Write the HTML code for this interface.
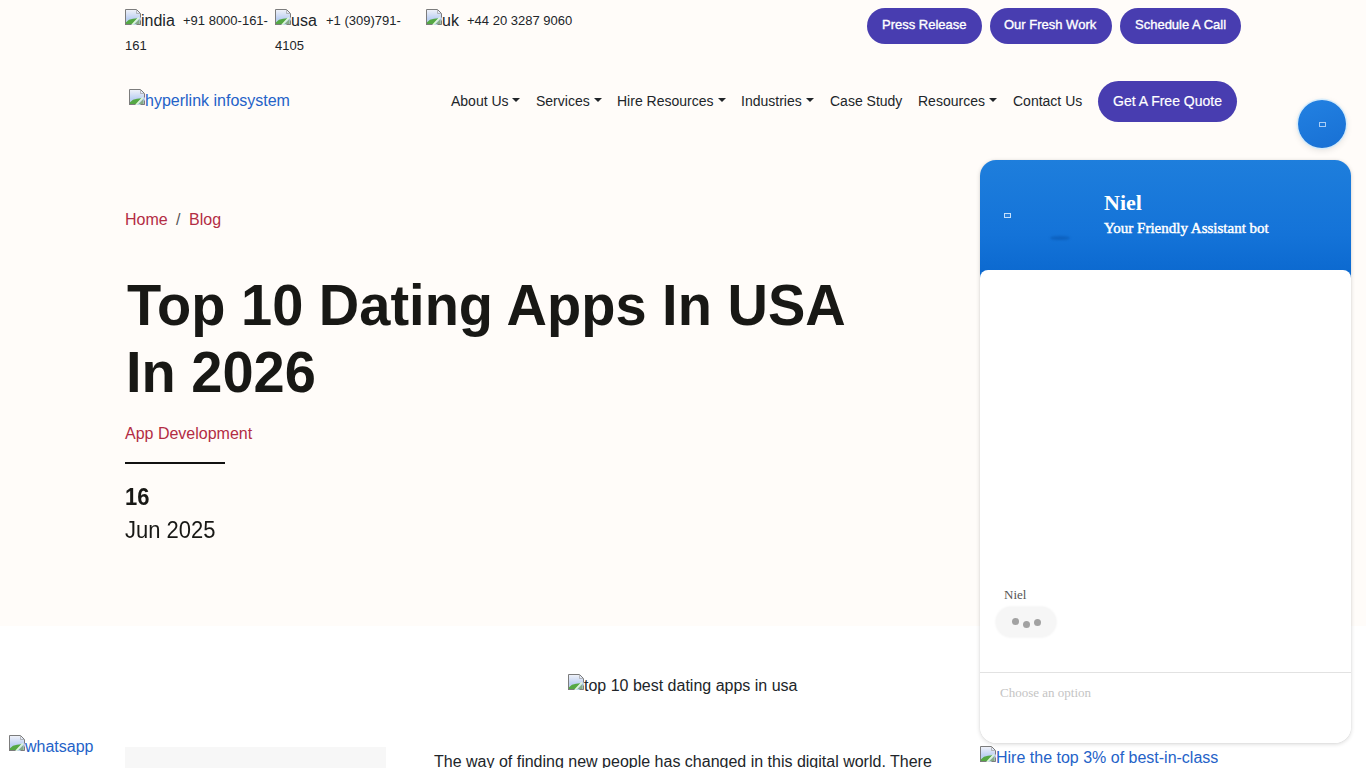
<!DOCTYPE html>
<html><head><meta charset="utf-8">
<style>
*{box-sizing:border-box;margin:0;padding:0}
html,body{width:1366px;height:768px;overflow:hidden}
body{font-family:"Liberation Sans",sans-serif;background:#fff;color:#212529;position:relative}
.t{position:absolute;white-space:nowrap;line-height:1}
.hero{position:absolute;left:0;top:0;width:1366px;height:626px;background:#fffcf9}
.bi{position:absolute;width:16px;height:16px}
.pill{position:absolute;top:8px;height:36px;border-radius:18px;background:#483db0}
.pt{color:#fff;font-size:13px;-webkit-text-stroke:.35px #fff}
.nav{font-size:14px;color:#212529}
.caret{position:absolute;width:0;height:0;border-left:4px solid transparent;border-right:4px solid transparent;border-top:4.5px solid #212529}
.red{color:#b32c44}
.lnk{color:#2462c8}
.ttl{font-size:56px;line-height:67px;font-weight:bold;color:#181815;transform:scaleY(1.04);transform-origin:0 53px}
.srf{font-family:"Liberation Serif",serif}
</style></head><body>
<svg width="0" height="0" style="position:absolute">
<defs>
<linearGradient id="sky" x1="0" y1="0" x2="0" y2="1"><stop offset="0" stop-color="#f4f5f9"/><stop offset=".62" stop-color="#bccff2"/><stop offset="1" stop-color="#bcd8e8"/></linearGradient>
<symbol id="brk" viewBox="0 0 16 16">
<path d="M0 0h11.5l4.5 4.5V16H0z" fill="url(#sky)"/>
<path d="M1 15V13.2Q3.5 10.2 8 9.8L12.5 9.2 7.6 15z" fill="#55a844"/>
<path d="M9.6 15L14.5 10V15z" fill="#86ab86"/>
<path d="M6.6 16.2L14 8.6" stroke="#dff7d6" stroke-width="1.5"/>
<path d="M.5 16V.5h11l4 4v4" fill="none" stroke="#7c7c7c"/>
<path d="M11.5 .5v4h4" fill="none" stroke="#a0a0a0" stroke-width=".7"/>
<path d="M.5 15.5h6M11.5 15.5h4V11.5" fill="none" stroke="#7c7c7c"/>
</symbol>
</defs></svg>
<div class="hero"></div>

<!-- top bar -->
<svg class="bi" style="left:125px;top:9px"><use href="#brk"/></svg>
<div class="t" style="left:141px;top:13px;font-size:16px">india</div>
<div class="t" style="left:183px;top:14px;font-size:13px">+91 8000-161-</div>
<div class="t" style="left:125px;top:39px;font-size:13px">161</div>

<svg class="bi" style="left:275px;top:9px"><use href="#brk"/></svg>
<div class="t" style="left:291px;top:13px;font-size:16px">usa</div>
<div class="t" style="left:326px;top:14px;font-size:13px">+1 (309)791-</div>
<div class="t" style="left:275px;top:39px;font-size:13px">4105</div>

<svg class="bi" style="left:426px;top:9px"><use href="#brk"/></svg>
<div class="t" style="left:442px;top:13px;font-size:16px">uk</div>
<div class="t" style="left:467px;top:14px;font-size:13px">+44 20 3287 9060</div>

<div class="pill" style="left:867px;width:115px"></div>
<div class="t pt" style="left:882px;top:18px">Press Release</div>
<div class="pill" style="left:990px;width:122px"></div>
<div class="t pt" style="left:1004px;top:18px">Our Fresh Work</div>
<div class="pill" style="left:1120px;width:121px"></div>
<div class="t pt" style="left:1135px;top:18px">Schedule A Call</div>

<!-- nav -->
<svg class="bi" style="left:129px;top:89px"><use href="#brk"/></svg>
<div class="t lnk" style="left:145px;top:93px;font-size:16px">hyperlink infosystem</div>

<div class="t nav" style="left:451px;top:94px">About Us</div><div class="caret" style="left:512px;top:98px"></div>
<div class="t nav" style="left:536px;top:94px">Services</div><div class="caret" style="left:594px;top:98px"></div>
<div class="t nav" style="left:617px;top:94px">Hire Resources</div><div class="caret" style="left:718px;top:98px"></div>
<div class="t nav" style="left:741px;top:94px">Industries</div><div class="caret" style="left:806px;top:98px"></div>
<div class="t nav" style="left:830px;top:94px">Case Study</div>
<div class="t nav" style="left:918px;top:94px">Resources</div><div class="caret" style="left:989px;top:98px"></div>
<div class="t nav" style="left:1013px;top:94px">Contact Us</div>
<div class="pill" style="left:1098px;top:81px;width:139px;height:41px;border-radius:20.5px"></div>
<div class="t" style="left:1113px;top:94px;font-size:14px;color:#fff;-webkit-text-stroke:.2px #fff">Get A Free Quote</div>

<!-- hero content -->
<div class="t red" style="left:125px;top:212px;font-size:16px">Home</div>
<div class="t" style="left:176px;top:212px;font-size:16px;color:#555">/</div>
<div class="t red" style="left:189px;top:212px;font-size:16px">Blog</div>
<div class="t ttl" style="left:127px;top:272px">Top 10 Dating Apps In USA</div>
<div class="t ttl" style="left:126px;top:339px">In 2026</div>
<div class="t red" style="left:125px;top:426px;font-size:16px">App Development</div>
<div class="t" style="left:125px;top:462px;width:100px;height:2px;background:#111"></div>
<div class="t" style="left:125px;top:487px;font-size:22px;font-weight:bold;color:#181815;transform:scaleY(1.07);transform-origin:0 18px">16</div>
<div class="t" style="left:125px;top:519px;font-size:22px;color:#181815;transform:scaleY(1.06);transform-origin:0 3px">Jun 2025</div>

<!-- content -->
<svg class="bi" style="left:568px;top:674px"><use href="#brk"/></svg>
<div class="t" style="left:584px;top:678px;font-size:16px;color:#212529">top 10 best dating apps in usa</div>
<svg class="bi" style="left:9px;top:735px"><use href="#brk"/></svg>
<div class="t lnk" style="left:25px;top:739px;font-size:16px">whatsapp</div>
<div class="t" style="left:125px;top:747px;width:261px;height:30px;background:#f7f7f7"></div>
<div class="t" style="left:434px;top:754px;font-size:16px;color:#212529">The way of finding new people has changed in this digital world. There</div>
<svg class="bi" style="left:980px;top:746px"><use href="#brk"/></svg>
<div class="t lnk" style="left:996px;top:750px;font-size:16px">Hire the top 3% of best-in-class</div>

<!-- chat -->
<div class="t" style="left:1298px;top:100px;width:48px;height:48px;border-radius:50%;background:linear-gradient(160deg,#2281e2,#1870d4);box-shadow:0 0 0 1.5px rgba(205,235,255,.8),0 2px 7px rgba(0,0,0,.12)"></div>
<div class="t" style="left:1319px;top:122px;width:7px;height:5px;border:1.5px solid #a9cdf5"></div>
<div class="t" style="left:980px;top:160px;width:371px;height:583px;border-radius:16px;background:#fff;box-shadow:0 1px 4px rgba(0,0,0,.17),0 0 1px rgba(0,0,0,.12);overflow:hidden">
  <div style="position:absolute;left:0;top:0;width:371px;height:125px;background:linear-gradient(#1e7edc 0%,#1473d8 60%,#0966cd 100%)"></div>
  <div style="position:absolute;left:0;top:110px;width:371px;height:480px;background:#fff;border-radius:8px 8px 0 0"></div>
  <div style="position:absolute;left:24px;top:53px;width:7px;height:5px;border:1.3px solid #c4e0fb;background:#2a80dc"></div>
  <div style="position:absolute;left:70px;top:76px;width:20px;height:4px;border-radius:50%;background:#0b5cb8;opacity:.75;filter:blur(1.3px)"></div>
  <div class="t srf" style="left:124px;top:32px;font-size:22px;font-weight:bold;color:#fff">Niel</div>
  <div class="t srf" style="left:124px;top:61px;font-size:15px;color:#fff;-webkit-text-stroke:.45px #fff">Your Friendly Assistant bot</div>
  <div class="t srf" style="left:24px;top:428px;font-size:13px;color:#555">Niel</div>
  <div style="position:absolute;left:16px;top:447px;width:60px;height:30px;border-radius:15px;background:#f6f6f6;box-shadow:0 0 2px 1px #f7f7f7"></div>
  <div style="position:absolute;left:32px;top:458px;width:7px;height:7px;border-radius:50%;background:#a2a2a2"></div>
  <div style="position:absolute;left:43px;top:461px;width:7px;height:7px;border-radius:50%;background:#a2a2a2"></div>
  <div style="position:absolute;left:54px;top:459px;width:7px;height:7px;border-radius:50%;background:#a2a2a2"></div>
  <div style="position:absolute;left:0;top:512px;width:371px;height:1px;background:#e2e2e2"></div>
  <div class="t srf" style="left:20px;top:526px;font-size:13px;color:#c4c4c4">Choose an option</div>
</div>
</body></html>
